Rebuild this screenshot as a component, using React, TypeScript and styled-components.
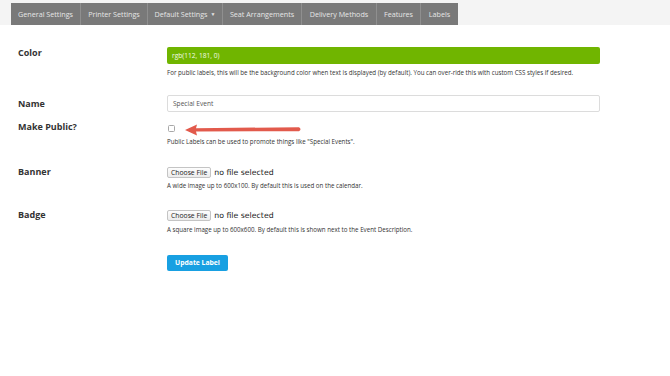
import styled, { createGlobalStyle } from "styled-components";

const GlobalStyle = createGlobalStyle`
    html, body {
        margin: 0;
        padding: 0;
        background: #fff;
        font-family: "Open Sans", "Liberation Sans", sans-serif;
        color: #333;
    }
`;

const TopStrip = styled.div`
    background-color: #f4f4f4;
    height: 25px;
    padding-left: 11px;
`;

const Nav = styled.ul`
    display: inline-flex;
    margin: 0;
    padding: 0;
    list-style: none;
    background-color: #797979;
    height: 22px;
`;

const Tab = styled.li<{ $w: number }>`
    width: ${(p) => p.$w}px;
    display: flex;
    align-items: center;
    justify-content: center;
    font-size: 7.2px;
    color: #e6e6e6;
    border-right: 1px solid #8f8f8f;
    box-sizing: border-box;
    white-space: nowrap;

    &:last-child {
        border-right: none;
    }

    .caret {
        font-size: 5px;
        margin-left: 3px;
    }
`;

const Form = styled.div`
    padding: 22px 0 0 18px;
`;

const Row = styled.div<{ $mb: number }>`
    display: grid;
    grid-template-columns: 149px 433px;
    margin-bottom: ${(p) => p.$mb}px;
`;

const Label = styled.div<{ $top?: number }>`
    font-size: 9px;
    font-weight: 700;
    color: #333;
    padding-top: ${(p) => p.$top ?? 0}px;
    line-height: 11px;
`;

const Field = styled.div`
    position: relative;
    display: flex;
    flex-direction: column;
`;

const ColorInput = styled.div`
    height: 17px;
    border-radius: 2px;
    background-color: #70b500;
    color: #f4fbe8;
    font-size: 6.6px;
    display: flex;
    align-items: center;
    padding-left: 5px;
`;

const TextInput = styled.div`
    height: 17px;
    box-sizing: border-box;
    border: 1px solid #dcdcdc;
    border-radius: 2px;
    background: #fff;
    color: #555;
    font-size: 6.6px;
    display: flex;
    align-items: center;
    padding-left: 5px;
`;

const Help = styled.div<{ $mt: number }>`
    margin-top: ${(p) => p.$mt}px;
    font-size: 6.2px;
    line-height: 8px;
    color: #333;
    white-space: nowrap;
`;

const Checkbox = styled.div`
    width: 5px;
    height: 5px;
    border: 1px solid #a8a8a8;
    border-radius: 1.5px;
    margin: 13px 0 0 1px;
    background: #fff;
`;

const Arrow = styled.svg`
    position: absolute;
    left: 16px;
    top: 11px;
`;

const FileLine = styled.div`
    display: flex;
    align-items: center;
    height: 12px;
`;

const FileButton = styled.div`
    height: 11px;
    box-sizing: border-box;
    border: 1px solid #c4c4c4;
    border-radius: 2px;
    background: linear-gradient(#fdfdfd, #ececec);
    font-size: 6.8px;
    color: #222;
    display: flex;
    align-items: center;
    padding: 0 3px;
    margin-right: 3px;
`;

const FileText = styled.span`
    font-family: "DejaVu Sans", "Liberation Sans", sans-serif;
    font-size: 7.8px;
    color: #222;
`;

const SubmitButton = styled.div`
    display: inline-flex;
    align-items: center;
    justify-content: center;
    width: 61px;
    height: 16px;
    border-radius: 2px;
    background-color: #18a0e2;
    color: #fff;
    font-size: 6.8px;
    font-weight: 700;
    margin-left: 149px;
`;

const FileField = () => (
    <FileLine>
        <FileButton>Choose File</FileButton>
        <FileText>no file selected</FileText>
    </FileLine>
);

const tabs = [
    { t: "General Settings", w: 70 },
    { t: "Printer Settings", w: 67 },
    { t: "Default Settings", w: 75, caret: true },
    { t: "Seat Arrangements", w: 79 },
    { t: "Delivery Methods", w: 75 },
    { t: "Features", w: 44 },
    { t: "Labels", w: 37 },
];

const App = () => {
    return (
        <>
            <GlobalStyle />
            <TopStrip>
                <Nav>
                    {tabs.map((tab) => (
                        <Tab key={tab.t} $w={tab.w}>
                            {tab.t}
                            {tab.caret && <span className="caret">▼</span>}
                        </Tab>
                    ))}
                </Nav>
            </TopStrip>
            <Form>
                <Row $mb={18}>
                    <Label $top={0}>Color</Label>
                    <Field>
                        <ColorInput>rgb(112, 181, 0)</ColorInput>
                        <Help $mt={5}>
                            For public labels, this will be the background color when text is displayed (by default). You can over-ride this with custom CSS styles if desired.
                        </Help>
                    </Field>
                </Row>
                <Row $mb={0}>
                    <Label $top={3}>Name</Label>
                    <Field>
                        <TextInput>Special Event</TextInput>
                    </Field>
                </Row>
                <Row $mb={20}>
                    <Label $top={9}>Make Public?</Label>
                    <Field>
                        <Checkbox />
                        <Help $mt={6}>Public Labels can be used to promote things like "Special Events".</Help>
                        <Arrow width="120" height="14" viewBox="0 0 120 14">
                            <path
                                d="M2 7 L14 1.5 L13 5.2 L116 4.2 Q119 6.2 116 8.2 L13 8.4 L14 12.5 Z"
                                fill="#e25a4c"
                            />
                        </Arrow>
                    </Field>
                </Row>
                <Row $mb={19}>
                    <Label $top={0}>Banner</Label>
                    <Field>
                        <FileField />
                        <Help $mt={4}>A wide image up to 600x100. By default this is used on the calendar.</Help>
                    </Field>
                </Row>
                <Row $mb={14}>
                    <Label $top={0}>Badge</Label>
                    <Field>
                        <FileField />
                        <Help $mt={5}>A square image up to 600x600. By default this is shown next to the Event Description.</Help>
                    </Field>
                </Row>
                <SubmitButton>Update Label</SubmitButton>
            </Form>
        </>
    );
};

export default App;
